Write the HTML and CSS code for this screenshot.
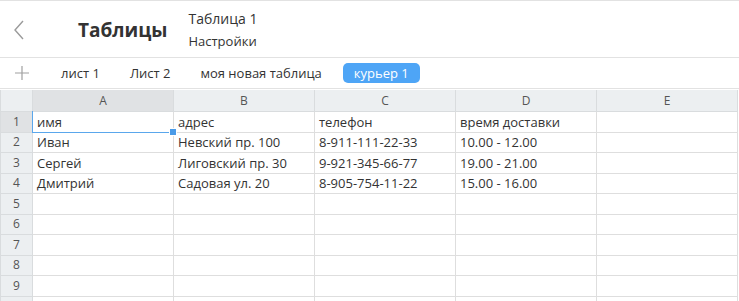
FILE: index.html
```html
<!DOCTYPE html>
<html lang="ru">
<head>
    <meta charset="UTF-8">
    <title>Таблицы</title>
    <link rel="stylesheet" href="styles.css">
</head>
<body>

<div class="header">
    <div class="back">
        <svg width="12" height="20" viewBox="0 0 12 20"><path d="M10 1 L2 10 L10 19" fill="none" stroke="#9a9a9a" stroke-width="1.4"/></svg>
    </div>
    <div class="title">Таблицы</div>
    <div class="doc">
        <div class="doc-name">Таблица 1</div>
        <div class="doc-settings">Настройки</div>
    </div>
</div>

<div class="tabs">
    <div class="add">
        <svg width="14" height="14" viewBox="0 0 14 14"><path d="M7 0 V14 M0 7 H14" stroke="#a0a0a0" stroke-width="1.2"/></svg>
    </div>
    <div class="tab">лист 1</div>
    <div class="tab">Лист 2</div>
    <div class="tab">моя новая таблица</div>
    <div class="tab active">курьер 1</div>
</div>

<table class="sheet">
    <colgroup>
        <col class="num-col"><col class="cell-col"><col class="cell-col"><col class="cell-col"><col class="cell-col"><col class="cell-col">
    </colgroup>
    <tr class="head">
        <th class="corner"></th><th class="sel-col">A</th><th>B</th><th>C</th><th>D</th><th>E</th>
    </tr>
    <tr><td class="num sel-row">1</td><td class="selected">имя<span class="frame"></span><span class="handle"></span></td><td>адрес</td><td>телефон</td><td>время доставки</td><td></td></tr>
    <tr><td class="num">2</td><td>Иван</td><td>Невский пр. 100</td><td>8-911-111-22-33</td><td>10.00 - 12.00</td><td></td></tr>
    <tr><td class="num">3</td><td>Сергей</td><td>Лиговский пр. 30</td><td>9-921-345-66-77</td><td>19.00 - 21.00</td><td></td></tr>
    <tr><td class="num">4</td><td>Дмитрий</td><td>Садовая ул. 20</td><td>8-905-754-11-22</td><td>15.00 - 16.00</td><td></td></tr>
    <tr><td class="num">5</td><td></td><td></td><td></td><td></td><td></td></tr>
    <tr><td class="num">6</td><td></td><td></td><td></td><td></td><td></td></tr>
    <tr><td class="num">7</td><td></td><td></td><td></td><td></td><td></td></tr>
    <tr><td class="num">8</td><td></td><td></td><td></td><td></td><td></td></tr>
    <tr><td class="num">9</td><td></td><td></td><td></td><td></td><td></td></tr>
    <tr><td class="num"></td><td></td><td></td><td></td><td></td><td></td></tr>
</table>

</body>
</html>
```

FILE: styles.css
```css
body {
    margin: 0;
    font-family: "Open Sans", "Noto Sans", sans-serif;
    color: #333;
    background: #fff;
    overflow: hidden;
}
.header {
    height: 56px;
    border-top: 1px solid #e2e2e2;
    border-bottom: 1px solid #e2e2e2;
    display: flex;
    align-items: center;
}
.back {
    width: 12px;
    margin-left: 13px;
    margin-top: 1px;
    display: flex;
}
.title {
    margin-left: 53px;
    font-size: 19px;
    font-weight: bold;
    color: #333;
    margin-top: 2px;
}
.doc {
    margin-left: 21px;
    display: flex;
    flex-direction: column;
    gap: 4px;
    margin-top: 1px;
}
.doc-name { font-size: 14px; }
.doc-settings { font-size: 13px; }
.tabs {
    height: 30px;
    border-bottom: 1px solid #e2e2e2;
    display: flex;
    align-items: center;
    font-size: 13px;
}
.add {
    width: 14px;
    margin-left: 15px;
    margin-right: 18px;
    display: flex;
}
.tab {
    padding: 0 14px;
    margin-right: 2px;
    line-height: 20px;
}
.tab.active {
    background: #4ea5f6;
    color: #fff;
    border-radius: 5px;
    margin-left: 5px;
    padding: 0 11px;
}
.sheet {
    border-collapse: collapse;
    table-layout: fixed;
    width: 737px;
    font-size: 13px;
    margin-top: 1px;
}
.num-col { width: 32px; }
.cell-col { width: 141px; }
.sheet th {
    height: 21px;
    background: #eceff1;
    border: 1px solid #d9dcde;
    border-top: none;
    font-weight: normal;
    font-size: 12px;
    color: #555;
    padding: 0;
}
.sheet th.sel-col { background: #e0e2e4; }
.sheet td {
    height: 19.5px;
    border: 1px solid #dedede;
    padding: 0 4px;
    white-space: nowrap;
    overflow: hidden;
    line-height: 18px;
}
.sheet td.num {
    background: #eceff1;
    border-color: #d9dcde;
    text-align: center;
    font-size: 12px;
    color: #555;
    padding: 0;
}
.sheet td.sel-row { background: #e0e2e4; }
.sheet td.selected {
    position: relative;
    overflow: visible;
}
.frame {
    position: absolute;
    left: -1px;
    right: -1px;
    top: -1px;
    bottom: -1px;
    border-left: 1px solid #5aa7ec;
    border-bottom: 1px solid #5aa7ec;
}
.handle {
    position: absolute;
    right: -4px;
    bottom: -4px;
    width: 6px;
    height: 6px;
    background: #4a9be8;
    border: 1px solid #fff;
}
```
